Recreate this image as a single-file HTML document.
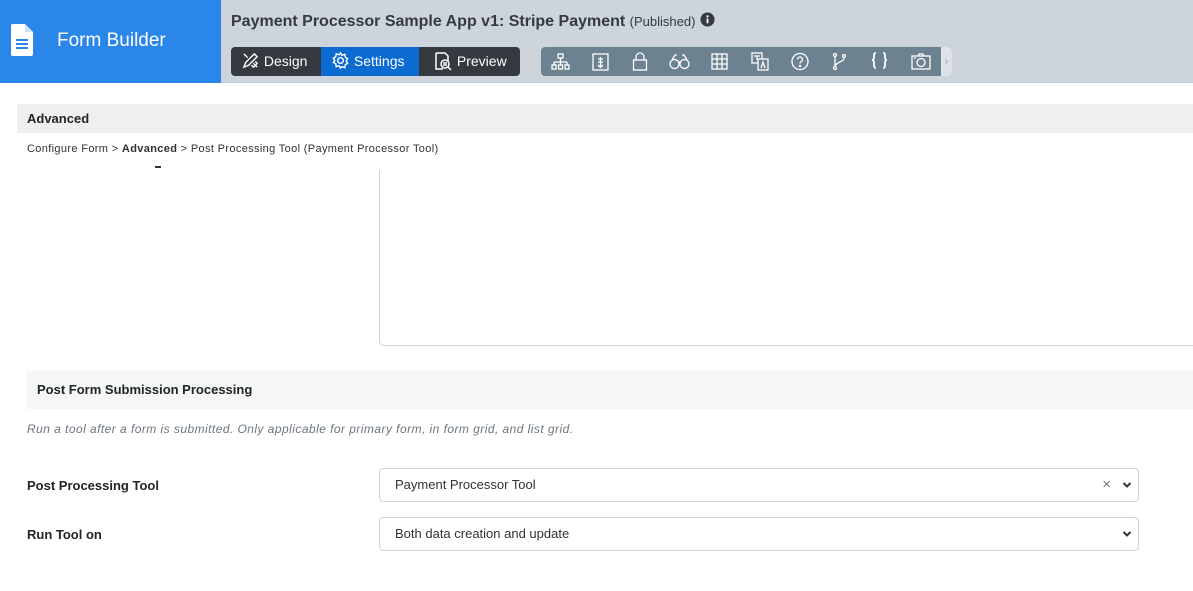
<!DOCTYPE html>
<html><head><meta charset="utf-8"><style>
*{box-sizing:border-box;margin:0;padding:0}
body{width:1193px;height:591px;overflow:hidden;background:#fff;font-family:"Liberation Sans",sans-serif;color:#212529;position:relative}
.abs{position:absolute}
.hdr{left:0;top:0;width:1193px;height:83px;background:#cdd4dc;border-bottom:1px solid #c4cbd2}
.brand{left:0;top:0;width:221px;height:83px;background:#2b86e9;color:#fff}
.title{left:231px;top:12px;font-size:16px;font-weight:bold;color:#343a40}
.title span{font-weight:normal;font-size:13px}
.seg{left:231px;top:47px;height:29px;width:289px;background:#343a40;border-radius:4px;color:#fff;font-size:14px}
.seg div{position:absolute;top:0;height:29px;line-height:29px}
.tb{left:541px;top:47px;width:411px;height:29px;background:#6c8291;border-radius:4px}
.tb .end{position:absolute;right:0;top:0;width:11px;height:29px;background:#dde2e6;border-radius:0 4px 4px 0;color:#999;font-size:10px;line-height:29px;text-align:center}
.adv{left:17px;top:104px;width:1176px;height:29px;background:#efefef;font-size:13px;font-weight:bold;line-height:29px;padding-left:10px}
.bc{left:27px;top:143px;font-size:11px;letter-spacing:0.35px;color:#333}
.ta{left:379px;top:170px;width:830px;height:176px;border:1px solid #ced4da;border-top:none;border-radius:0 0 0 5px}
.pf{left:27px;top:371px;width:1166px;height:38px;background:#f5f6f6;font-size:13px;font-weight:bold;line-height:38px;padding-left:10px}
.hint{left:27px;top:422px;font-size:12px;letter-spacing:0.45px;font-style:italic;color:#6c757d}
.lbl{left:27px;font-size:13px;font-weight:bold}
.sel{left:379px;width:760px;height:34px;border:1px solid #ced4da;border-radius:4px;font-size:13px;line-height:32px;padding-left:15px;color:#333}
.chev{position:absolute;right:6px;top:12px}
.x{position:absolute;right:27px;top:0;color:#777;font-size:15px}
</style></head><body>
<div class="abs hdr"></div>
<div class="abs brand">
<svg class="abs" style="left:11px;top:24px" width="22" height="32" viewBox="0 0 22 32"><path d="M1 0h13l8 8v22a2 2 0 0 1-2 2H2a2 2 0 0 1-2-2V1z" fill="#fff"/><path d="M14 0v8h8" fill="#cfe2fa"/><rect x="5" y="15" width="12" height="2" fill="#2b86e9"/><rect x="5" y="19" width="12" height="2" fill="#2b86e9"/><rect x="5" y="23" width="12" height="2" fill="#2b86e9"/></svg>
<div class="abs" style="left:57px;top:30px;font-size:19px">Form Builder</div>
</div>
<div class="abs title">Payment Processor Sample App v1: Stripe Payment <span>(Published)</span> <svg width="15" height="15" viewBox="0 0 16 16" style="vertical-align:-1px"><circle cx="8" cy="8" r="7.5" fill="#343a40"/><rect x="7" y="7" width="2" height="5" fill="#fff"/><circle cx="8" cy="4.6" r="1.2" fill="#fff"/></svg></div>
<div class="abs seg">
<div style="left:10px"><svg width="19" height="19" viewBox="0 0 20 20" style="vertical-align:-4px" fill="none" stroke="#fff" stroke-width="1.5"><path d="M3 17l2-5 9-9 3 3-9 9z M3 3l4 4 M13 13l4 4 M15 11l2 2-4 4-2-2"/></svg> Design</div>
<div style="left:90px;width:98px;background:#0b6bd1;padding-left:10px"><svg width="19" height="19" viewBox="0 0 20 20" style="vertical-align:-4px" fill="none" stroke="#fff" stroke-width="1.5"><circle cx="10" cy="10" r="3"/><path d="M10 2l1.5 2.5 3-1 .5 3 2.5 1.5-1.5 2.5 1.5 2.5-2.5 1.5-.5 3-3-1L10 18l-1.5-2.5-3 1-.5-3L2.5 12 4 10 2.5 7.5 5 6l.5-3 3 1z"/></svg> Settings</div>
<div style="left:202px"><svg width="20" height="20" viewBox="0 0 20 20" style="vertical-align:-5px" fill="none" stroke="#fff" stroke-width="1.5"><path d="M3 2h9l3 3v6M3 2v16h7"/><circle cx="12" cy="13" r="4"/><path d="M15 16l3 3 M10 12h4 M10 14h4"/></svg> Preview</div>
</div>
<div class="abs tb">
<svg class="abs" style="left:0;top:0" width="400" height="29" viewBox="0 0 400 29" fill="none" stroke="#fff" stroke-width="1.3">
<g transform="translate(10,6)"><rect x="7" y="1" width="5" height="4"/><path d="M9.5 5v4M3 9h13M3 9v3M9.5 9v3M16 9v3"/><rect x="1" y="12" width="4" height="4"/><rect x="7.5" y="12" width="4" height="4"/><rect x="14" y="12" width="4" height="4"/></g>
<g transform="translate(51,6)"><rect x="1" y="1" width="15" height="16"/><path d="M8.5 4v10M6 12l2.5 2.5L11 12M6 6h5M6 9h5"/></g>
<g transform="translate(91,5)"><rect x="1.5" y="8" width="13" height="10"/><path d="M4 8V5a4 4 0 0 1 8 0v3"/></g>
<g transform="translate(128,6)"><circle cx="5.5" cy="11" r="4.5"/><circle cx="15.5" cy="11" r="4.5"/><path d="M3 7l3-5h2M18 7l-3-5h-2M9 9h3"/></g>
<g transform="translate(170,6)"><rect x="1" y="1" width="15" height="15"/><path d="M6 1v15M11 1v15M1 6h15M1 11h15"/></g>
<g transform="translate(210,5)"><rect x="1" y="1" width="10" height="10"/><rect x="7" y="7" width="10" height="11" fill="#6c8291"/><path d="M10 16l2-6 2 6M3 4h6M6 4v4"/></g>
<g transform="translate(250,5)"><circle cx="9" cy="9.5" r="8"/><path d="M6.5 7.5a2.5 2.5 0 1 1 3.5 2.3c-.8.4-1 1-1 1.7"/><circle cx="9" cy="14" r=".6" fill="#fff"/></g>
<g transform="translate(291,5)"><circle cx="3" cy="3" r="1.5"/><circle cx="3" cy="16" r="1.5"/><circle cx="12" cy="4" r="1.5"/><path d="M3 4.5v10M12 5.5c0 5-8 4-9 9"/></g>
<g transform="translate(330,5)" stroke-width="1.8"><path d="M5 1c-2 0-2 1-2 3s0 4-2 4c2 0 2 2 2 4s0 4 2 4M12 1c2 0 2 1 2 3s0 4 2 4c-2 0-2 2-2 4s0 4-2 4"/></g>
<g transform="translate(370,6)"><rect x="1" y="3" width="18" height="13"/><circle cx="10" cy="9.5" r="4"/><path d="M7 3l1-2h4l1 2M3 5h2"/></g>
</svg>
<div class="end">›</div>
</div>
<div class="abs adv">Advanced</div>
<div class="abs bc">Configure Form &gt; <b>Advanced</b> &gt; Post Processing Tool (Payment Processor Tool)</div>
<div class="abs" style="left:155px;top:166px;width:6px;height:2px;background:#333"></div>
<div class="abs ta"></div>
<div class="abs pf">Post Form Submission Processing</div>
<div class="abs hint">Run a tool after a form is submitted. Only applicable for primary form, in form grid, and list grid.</div>
<div class="abs lbl" style="top:478px">Post Processing Tool</div>
<div class="abs sel" style="top:468px">Payment Processor Tool<span class="x">×</span><svg class="chev" width="10" height="8" viewBox="0 0 10 8"><path d="M1.5 2l3.5 3.5L8.5 2" fill="none" stroke="#333" stroke-width="2"/></svg></div>
<div class="abs lbl" style="top:527px">Run Tool on</div>
<div class="abs sel" style="top:517px">Both data creation and update<svg class="chev" width="10" height="8" viewBox="0 0 10 8"><path d="M1.5 2l3.5 3.5L8.5 2" fill="none" stroke="#333" stroke-width="2"/></svg></div>
</body></html>
